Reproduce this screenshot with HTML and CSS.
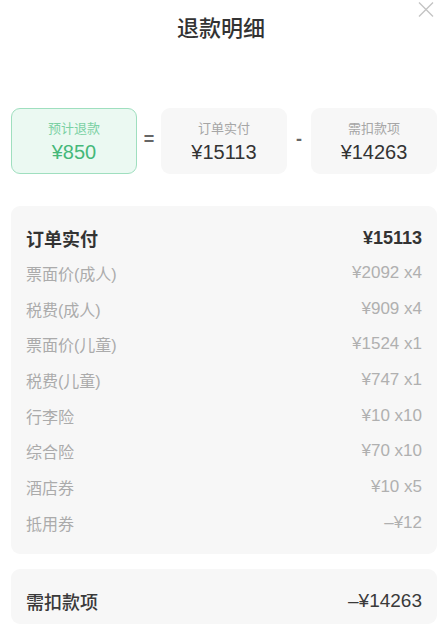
FILE: index.html
```html
<!DOCTYPE html>
<html lang="zh-CN">
<head>
  <meta charset="UTF-8">
  <title>退款明细</title>
  <link rel="stylesheet" href="styles.css">
</head>
<body>
  <div class="sheet">
    <div class="header">
      <h2>退款明细</h2>
      <span class="close">
        <svg width="16" height="15" viewBox="0 0 16 15"><path d="M1 0.5 L15 14.5 M15 0.5 L1 14.5" stroke="#c4c4c4" stroke-width="1.4" fill="none"/></svg>
      </span>
    </div>

    <div class="summary">
      <div class="box refund">
        <div class="label">预计退款</div>
        <div class="amount">¥850</div>
      </div>
      <span class="op">=</span>
      <div class="box">
        <div class="label">订单实付</div>
        <div class="amount">¥15113</div>
      </div>
      <span class="op">-</span>
      <div class="box">
        <div class="label">需扣款项</div>
        <div class="amount">¥14263</div>
      </div>
    </div>

    <div class="card">
      <div class="row head"><span>订单实付</span><span class="num">¥15113</span></div>
      <div class="row"><span>票面价(成人)</span><span class="val">¥2092 x4</span></div>
      <div class="row"><span>税费(成人)</span><span class="val">¥909 x4</span></div>
      <div class="row"><span>票面价(儿童)</span><span class="val">¥1524 x1</span></div>
      <div class="row"><span>税费(儿童)</span><span class="val">¥747 x1</span></div>
      <div class="row"><span>行李险</span><span class="val">¥10 x10</span></div>
      <div class="row"><span>综合险</span><span class="val">¥70 x10</span></div>
      <div class="row"><span>酒店券</span><span class="val">¥10 x5</span></div>
      <div class="row"><span>抵用券</span><span class="val">–¥12</span></div>
    </div>

    <div class="card total">
      <div class="row head"><span>需扣款项</span><span class="num light">–¥14263</span></div>
    </div>
  </div>
</body>
</html>
```

FILE: styles.css
```css
body {
  margin: 0;
  background: #fff;
  font-family: "Liberation Sans", "Noto Sans CJK SC", sans-serif;
  color: #333;
}
.sheet {
  width: 442px;
  padding: 0 5px 0 11px;
  box-sizing: border-box;
}
.header {
  position: relative;
  height: 108px;
}
.header h2 {
  margin: 0;
  padding-top: 15px;
  text-align: center;
  font-size: 22px;
  line-height: 28px;
  font-weight: 500;
  color: #333;
  margin-left: -6px;
}
.close {
  position: absolute;
  top: 2px;
  right: 3px;
  display: flex;
}
.summary {
  display: flex;
  align-items: center;
  height: 66px;
}
.box {
  width: 126px;
  height: 66px;
  box-sizing: border-box;
  background: #f7f7f7;
  border-radius: 9px;
  display: flex;
  flex-direction: column;
  align-items: center;
  padding-top: 13px;
}
.box .label {
  font-size: 13px;
  line-height: 16px;
  color: #a6a6a6;
}
.box .amount {
  font-size: 20px;
  line-height: 24px;
  margin-top: 3px;
  color: #333;
}
.box.refund {
  background: #ebf9f2;
  border: 1px solid #9fdfbf;
  padding-top: 12px;
}
.box.refund .label { color: #7bd1a4; }
.box.refund .amount { color: #45b879; }
.op {
  width: 24px;
  text-align: center;
  font-size: 18px;
  font-weight: 700;
  color: #666;
  margin-top: -4px;
}
.card {
  margin-top: 32px;
  background: #f7f7f7;
  border-radius: 9px;
  padding: 15px 15px 13px 15px;
}
.row {
  display: flex;
  justify-content: space-between;
  align-items: center;
  height: 35.7px;
  font-size: 16px;
  color: #ababab;
}
.row .val { font-size: 17px; color: #b0b0b0; }
.row.head {
  height: 34px;
  font-size: 18px;
  font-weight: 600;
  color: #333;
}
.row .num { font-size: 18px; }
.card.total {
  margin-top: 15px;
  padding-bottom: 6px;
}
.card.total .row.head { font-weight: 500; color: #3a3a3a; }
.num.light { font-weight: 400; font-size: 19px; }
```
